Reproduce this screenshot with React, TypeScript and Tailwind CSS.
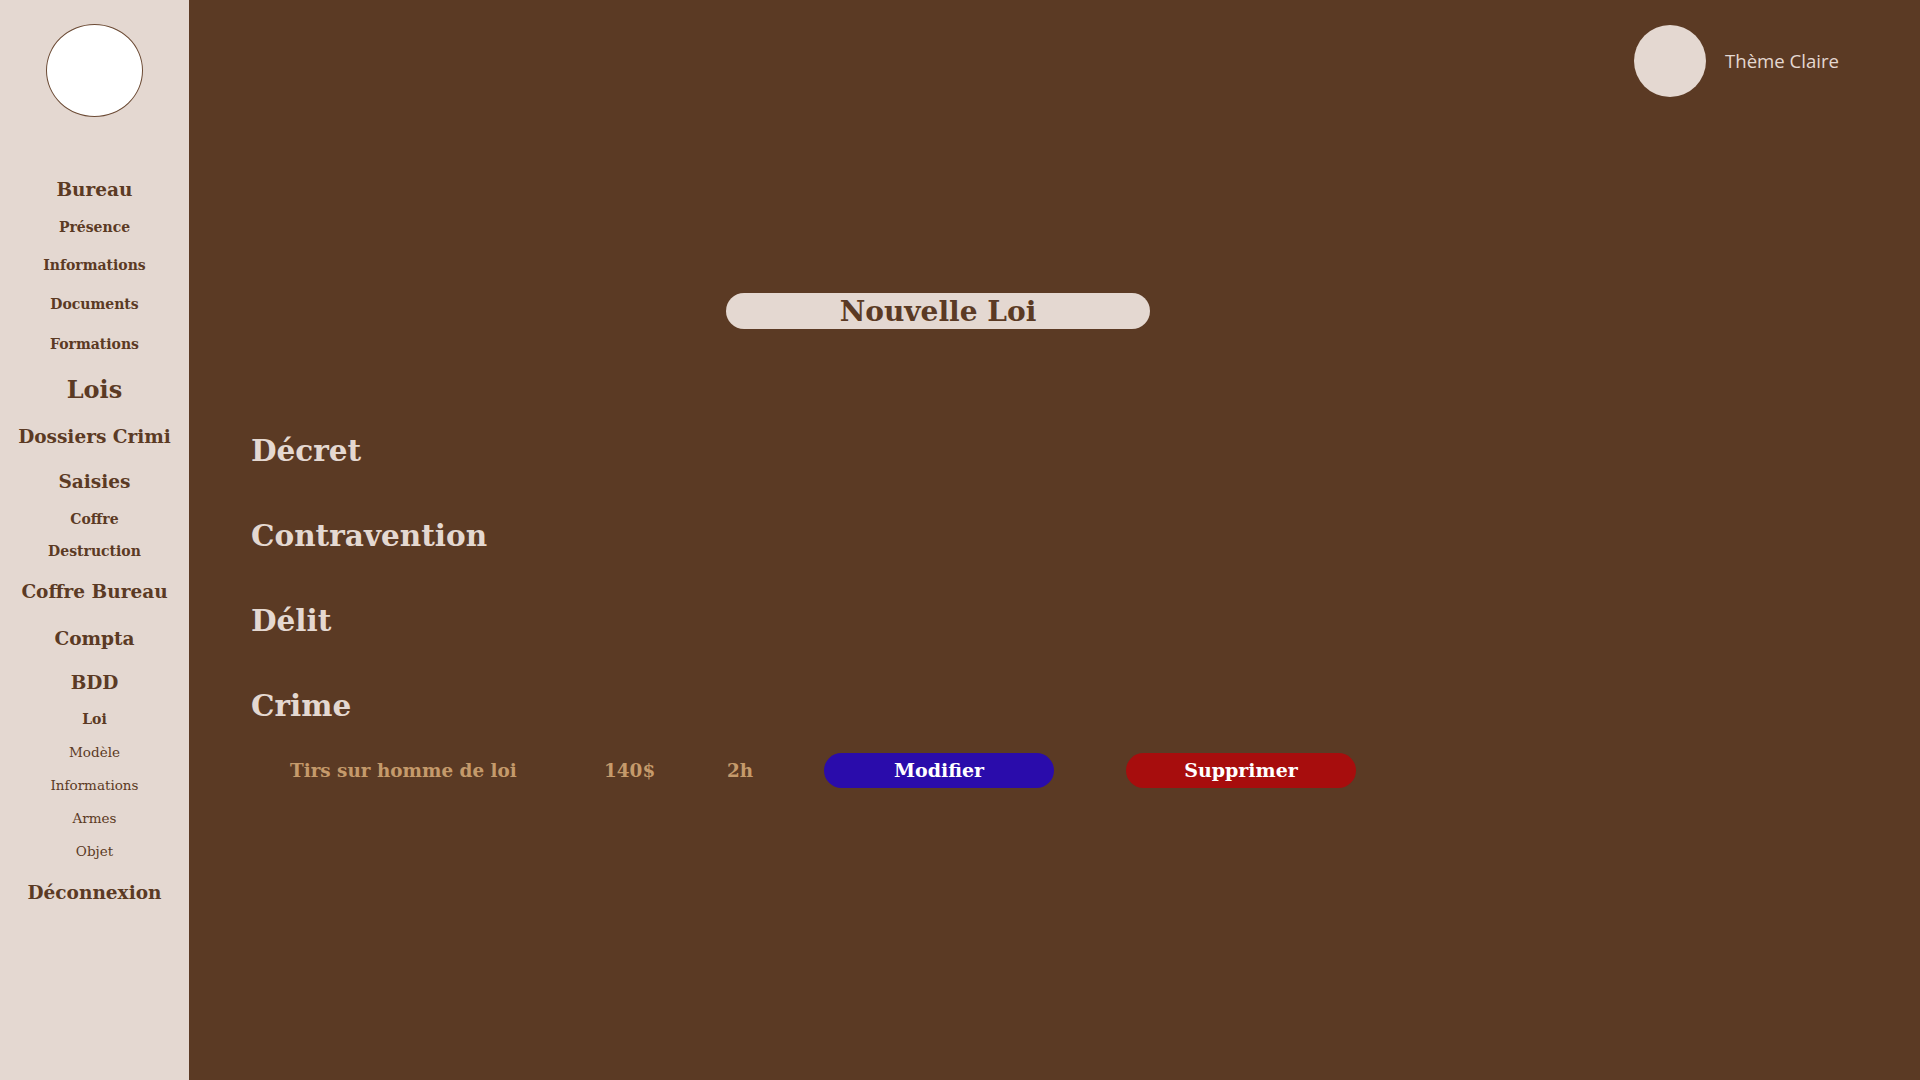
import React from "react"

type NavItem = {
  label: string
  h: string
  size: string
  weight: string
}

const navItems: NavItem[] = [
  { label: "Bureau", h: "h-[37px]", size: "text-[18.5px]", weight: "font-bold" },
  { label: "Présence", h: "h-[38px]", size: "text-[14px]", weight: "font-bold" },
  { label: "Informations", h: "h-[39px]", size: "text-[14px]", weight: "font-bold" },
  { label: "Documents", h: "h-[39px]", size: "text-[14px]", weight: "font-bold" },
  { label: "Formations", h: "h-[41px]", size: "text-[14px]", weight: "font-bold" },
  { label: "Lois", h: "h-[49px]", size: "text-[24px]", weight: "font-bold" },
  { label: "Dossiers Crimi", h: "h-[46px]", size: "text-[18.5px]", weight: "font-bold" },
  { label: "Saisies", h: "h-[44px]", size: "text-[18.5px]", weight: "font-bold" },
  { label: "Coffre", h: "h-[31px]", size: "text-[14px]", weight: "font-bold" },
  { label: "Destruction", h: "h-[33px]", size: "text-[14px]", weight: "font-bold" },
  { label: "Coffre Bureau", h: "h-[47px]", size: "text-[18.5px]", weight: "font-bold" },
  { label: "Compta", h: "h-[48px]", size: "text-[18.5px]", weight: "font-bold" },
  { label: "BDD", h: "h-[40px]", size: "text-[18.5px]", weight: "font-bold" },
  { label: "Loi", h: "h-[33px]", size: "text-[14px]", weight: "font-bold" },
  { label: "Modèle", h: "h-[33px]", size: "text-[13.5px]", weight: "font-normal" },
  { label: "Informations", h: "h-[33px]", size: "text-[13.5px]", weight: "font-normal" },
  { label: "Armes", h: "h-[33px]", size: "text-[13.5px]", weight: "font-normal" },
  { label: "Objet", h: "h-[33px]", size: "text-[13.5px]", weight: "font-normal" },
  { label: "Déconnexion", h: "h-[50px]", size: "text-[18.5px]", weight: "font-bold" },
]

const categories = ["Décret", "Contravention", "Délit", "Crime"]

const Sidebar = () => {
  return (
    <aside className="w-[189px] shrink-0 bg-[#e4d8d1] text-[#5b3a24] flex flex-col items-center">
      <div className="mt-[24px] w-[97px] h-[93px] rounded-[50%] bg-white border border-[#6b4a34]"></div>
      <nav className="mt-[54px] w-full flex flex-col">
        {navItems.map((item, i) => (
          <a
            key={i}
            className={`${item.h} ${item.size} ${item.weight} flex items-center justify-center whitespace-nowrap cursor-pointer`}
          >
            {item.label}
          </a>
        ))}
      </nav>
    </aside>
  )
}

const LawRow = () => {
  return (
    <div className="mt-[27px] ml-[39px] flex items-center h-[35px] text-[18.4px] font-bold">
      <span className="w-[314px] text-[#c59a6b]">Tirs sur homme de loi</span>
      <span className="w-[123px] text-[#c59a6b]">140$</span>
      <span className="w-[97px] text-[#c59a6b]">2h</span>
      <button className="w-[230px] h-[35px] rounded-full bg-[#2a0cab] text-white text-[19px]">Modifier</button>
      <button className="ml-[72px] w-[230px] h-[35px] rounded-full bg-[#a70d0d] text-white text-[19px]">Supprimer</button>
    </div>
  )
}

export default function App() {
  return (
    <div
      className="flex w-full h-screen min-h-[1080px] bg-[#5b3a24]"
      style={{ fontFamily: '"DejaVu Serif", serif' }}
    >
      <Sidebar />
      <main className="flex-1 pl-[62px] pr-[80px] pt-[25px] text-[#e4d8d1]">
        <div className="flex justify-end">
          <div className="w-[206px] flex items-center gap-[19px] cursor-pointer">
            <div className="w-[72px] h-[72px] rounded-full bg-[#e4d8d1] shrink-0"></div>
            <span className="text-[18.6px] font-['Open_Sans',sans-serif]">Thème Claire</span>
          </div>
        </div>

        <button className="mt-[196px] ml-[475px] w-[424px] h-[36px] rounded-full bg-[#e4d8d1] text-[#5b3a24] text-[28px] font-bold leading-[36px] flex items-center justify-center pt-[1px]">
          Nouvelle Loi
        </button>

        <div className="mt-[102px] flex flex-col gap-[45px]">
          {categories.map((c) => (
            <h2 key={c} className="h-[40px] leading-[40px] text-[29.5px] font-bold">
              {c}
            </h2>
          ))}
        </div>

        <LawRow />
      </main>
    </div>
  )
}
